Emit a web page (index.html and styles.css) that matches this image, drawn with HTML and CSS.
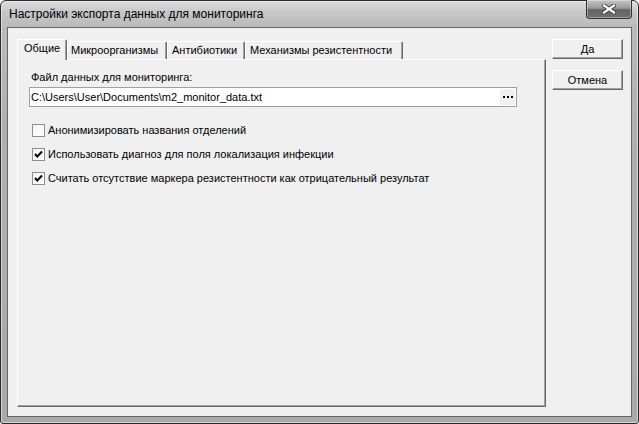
FILE: index.html
```html
<!DOCTYPE html>
<html lang="ru">
<head>
<meta charset="utf-8">
<title>Настройки экспорта данных для мониторинга</title>
<link rel="stylesheet" href="styles.css">
</head>
<body>
<div class="window">
  <div class="titlebar">
    <span class="title">Настройки экспорта данных для мониторинга</span>
    <div class="close">
      <svg width="14" height="10" viewBox="0 0 14 10">
        <path d="M2 1.5 L12 8.5 M12 1.5 L2 8.5" stroke="#3a3a3a" stroke-width="4" stroke-linecap="square"/>
        <path d="M2 1.5 L12 8.5 M12 1.5 L2 8.5" stroke="#ffffff" stroke-width="2.2" stroke-linecap="square"/>
      </svg>
    </div>
  </div>
  <div class="client">
    <div class="tabctl">
      <div class="tabs">
        <div class="tab active t1">Общие</div>
        <div class="tab t2">Микроорганизмы</div>
        <div class="tab t3">Антибиотики</div>
        <div class="tab t4">Механизмы резистентности</div>
      </div>
      <div class="panel">
        <div class="label">Файл данных для мониторинга:</div>
        <div class="field">
          <span class="path">C:\Users\User\Documents\m2_monitor_data.txt</span>
          <span class="browse"><i></i><i></i><i></i></span>
        </div>
        <div class="checks">
          <div class="check"><span class="box"></span><span>Анонимизировать названия отделений</span></div>
          <div class="check"><span class="box"><svg width="11" height="11" viewBox="0 0 11 11"><path d="M2 5 L4.3 7.5 L9 2.5" stroke="#000" stroke-width="2" fill="none"/></svg></span><span>Использовать диагноз для поля локализация инфекции</span></div>
          <div class="check"><span class="box"><svg width="11" height="11" viewBox="0 0 11 11"><path d="M2 5 L4.3 7.5 L9 2.5" stroke="#000" stroke-width="2" fill="none"/></svg></span><span>Считать отсутствие маркера резистентности как отрицательный результат</span></div>
        </div>
      </div>
    </div>
    <div class="buttons">
      <div class="btn">Да</div>
      <div class="btn">Отмена</div>
    </div>
  </div>
</div>
</body>
</html>
```
FILE: styles.css
```css
* { box-sizing: border-box; }
html, body { margin: 0; padding: 0; background: #ffffff; }
body {
  width: 639px;
  height: 424px;
  overflow: hidden;
  font-family: "Liberation Sans", Arial, sans-serif;
  font-size: 11px;
  color: #000;
}
.window {
  width: 639px;
  height: 424px;
  border: 1px solid #2a2a2a;
  border-radius: 6px 6px 3px 3px;
  background: linear-gradient(to bottom, #dcdcdc 0px, #c6c6c6 12px, #bababa 26px, #b0b0b0 120px, #a9a9a9 100%);
  box-shadow: inset 0 0 0 1px rgba(255,255,255,0.5);
  display: flex;
  flex-direction: column;
  padding: 0 6px 6px 6px;
}
.titlebar {
  height: 26px;
  display: flex;
  align-items: center;
  justify-content: space-between;
  padding-left: 2px;
}
.title {
  font-size: 12px;
  line-height: 15px;
  color: #000;
}
.close {
  width: 46px;
  height: 19px;
  align-self: flex-start;
  margin-top: -1px;
  border: 1px solid #333;
  border-top: none;
  border-radius: 0 0 4px 4px;
  background: linear-gradient(to bottom, #c4c4c4 0%, #9a9a9a 45%, #646464 55%, #6f6f6f 100%);
  box-shadow: inset 0 0 0 1px rgba(255,255,255,0.35);
  display: flex;
  align-items: center;
  justify-content: center;
}
.client {
  flex: 1;
  border: 1px solid #666;
  background: #f0f0f0;
  display: flex;
  padding: 11px 8px 9px 9px;
}
.tabctl {
  width: 529px;
  display: flex;
  flex-direction: column;
}
.tabs {
  height: 20px;
  display: flex;
  align-items: flex-end;
}
.tab {
  height: 18px;
  border-top: 1px solid #fff;
  border-left: 1px solid #fff;
  border-right: 1px solid #696969;
  box-shadow: inset -1px 0 0 #a0a0a0;
  border-radius: 2px 2px 0 0;
  padding-left: 4px;
  line-height: 16px;
  white-space: nowrap;
  background: #f0f0f0;
}
.tab.active {
  height: 21px;
  margin-bottom: -1px;
  position: relative;
  z-index: 1;
  padding-left: 6px;
}
.t1 { width: 50px; }
.t2 { width: 100px; padding-left: 3px; }
.t3 { width: 78px; }
.t4 { width: 158px; }
.panel {
  flex: 1;
  border-top: 1px solid #fff;
  border-left: 1px solid #fff;
  border-right: 1px solid #696969;
  border-bottom: 1px solid #696969;
  box-shadow: inset -1px -1px 0 #a0a0a0;
  padding: 11px 0 0 11px;
}
.label {
  line-height: 13px;
  margin-left: 2px;
}
.field {
  width: 488px;
  height: 20px;
  margin-top: 3px;
  border: 1px solid #a0a0a0;
  background: #fff;
  display: flex;
  align-items: center;
  justify-content: space-between;
  padding: 0 1px;
  line-height: 13px;
}
.browse {
  width: 15px;
  height: 16px;
  background: #f0f0f0;
  display: flex;
  align-items: center;
  justify-content: center;
  gap: 2px;
  padding-bottom: 1px;
}
.browse i {
  display: block;
  width: 2px;
  height: 2px;
  background: #000;
}
.checks {
  margin-top: 17px;
  margin-left: 3px;
  display: flex;
  flex-direction: column;
  gap: 11px;
}
.check {
  display: flex;
  align-items: center;
  height: 13px;
  line-height: 13px;
  white-space: nowrap;
}
.box {
  width: 13px;
  height: 13px;
  flex: none;
  border: 1px solid #8e8f8f;
  background: linear-gradient(135deg, #f2f2f2, #ffffff);
  margin-right: 3px;
  display: flex;
  align-items: center;
  justify-content: center;
}
.box svg { display: block; }
.buttons {
  width: 71px;
  margin-left: 6px;
  display: flex;
  flex-direction: column;
  gap: 11px;
}
.btn {
  height: 20px;
  border: 1px solid;
  border-color: #fff #696969 #696969 #fff;
  box-shadow: inset -1px -1px 0 #a0a0a0;
  background: #f0f0f0;
  display: flex;
  align-items: center;
  justify-content: center;
  line-height: 13px;
}
```
